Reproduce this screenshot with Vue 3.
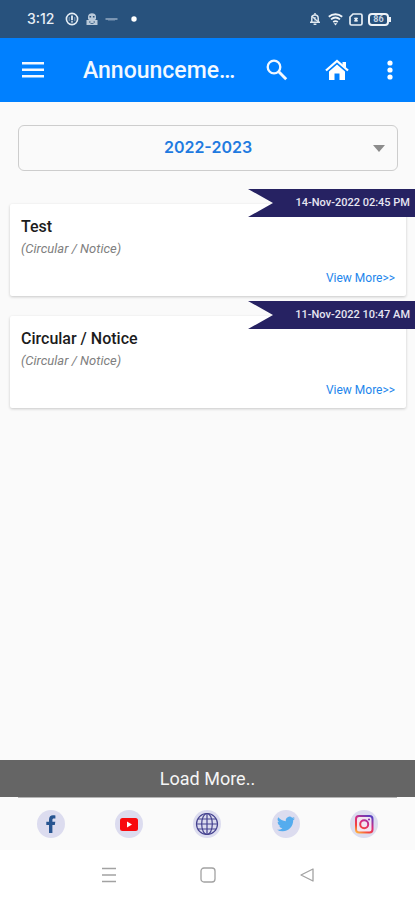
<script setup>
import { ref } from 'vue'

const session = ref('2022-2023')

const notices = [
  { title: 'Test', type: '(Circular / Notice)', date: '14-Nov-2022 02:45 PM' },
  { title: 'Circular / Notice', type: '(Circular / Notice)', date: '11-Nov-2022 10:47 AM' },
]
</script>

<template>
  <div class="screen">
    <div class="status">
      <span class="time">3:12</span>
      <svg class="s-alert" width="14" height="14" viewBox="0 0 14 14" fill="none" stroke="#e4edf5">
        <circle cx="7" cy="7" r="5.6" stroke-width="1.6" />
        <path d="M7 3.6v4.6M7 9.2v1.4" stroke-width="1.8" />
        <path d="M4.2 5v4M9.8 5v4" stroke-width=".8" opacity=".6" />
      </svg>
      <svg class="s-app" width="12" height="14" viewBox="0 0 12 14" fill="#b9c9d9">
        <path d="M2 7V4.500C2 0 10 0 10 4.500V7l-1 1H3z" />
        <path d="M.5 8h11v5H.5z" />
        <path d="M3.500 4h1.600v1.600H3.500zM6.900 4h1.600v1.600H6.900zM3 9.500h1.500v1H3zM7.500 9.500H9v1H7.500zM4.500 11.200h3v.8h-3z" fill="#28527d" />
      </svg>
      <svg class="s-dash" width="13" height="6" viewBox="0 0 13 6" fill="none" stroke="#9cb2c7">
        <path d="M.5 3h12" stroke-width="1.400" />
        <path d="M3 4.200h7" stroke-width="1" opacity=".5" />
      </svg>
      <svg class="s-dot" width="6" height="6" viewBox="0 0 6 6"><circle cx="3" cy="3" r="2.700" fill="#fff" /></svg>
      <span class="grow"></span>
      <svg width="12" height="14" viewBox="0 0 12 14" fill="none" stroke="#dfe8f0" stroke-width="1.500">
        <path d="M2.800 9.600V6.200C2.800 4 4.200 2.900 6 2.900S9.200 4 9.200 6.200v3.400M1 10.200h10M4.600 12.300h2.800M6 1v2" />
        <path d="M2.500 4l7 6M6 5v3.500" stroke-width="1.200" />
      </svg>
      <svg class="s-wifi" width="15" height="13" viewBox="0 0 15 13" fill="none" stroke="#f0f5f9" stroke-width="1.800">
        <path d="M.8 3.800c4-3.400 9.400-3.400 13.400 0M3 6.400c2.800-2.300 6.200-2.300 9 0M5.200 8.900c1.500-1.100 3.100-1.100 4.600 0" />
        <path d="M5.700 10.300h3.600L7.500 12.400z" fill="#f0f5f9" stroke="none" />
      </svg>
      <svg class="s-sim" width="14" height="13" viewBox="0 0 14 13" fill="none" stroke="#e8eff5" stroke-width="1.700">
        <path d="M4 1h7.500Q13 1 13 2.500v8Q13 12 11.500 12h-9Q1 12 1 10.500V4z" />
        <path d="M5.600 4.700l2.800 3.800M8.400 4.700L5.600 8.500" />
      </svg>
      <span class="battery">86</span>
    </div>

    <header class="bar">
      <button class="icon menu" aria-label="Menu">
        <svg width="22" height="16" viewBox="0 0 22 16" fill="#f2f8ff"><path d="M0 0h22v2.500H0zM0 6.500h22V9H0zM0 13h22v2.500H0z" /></svg>
      </button>
      <h1>Announceme…</h1>
      <button class="icon search" aria-label="Search">
        <svg width="22" height="22" viewBox="0 0 22 22" fill="none" stroke="#f2f8ff">
          <circle cx="8" cy="8" r="6.300" stroke-width="2.300" />
          <path d="M12.800 12.800l7.400 7.400" stroke-width="2.900" />
        </svg>
      </button>
      <button class="icon home" aria-label="Home">
        <svg width="24" height="22" viewBox="0 0 24 22">
          <path d="M1 11.500L12 2l11 9.500" fill="none" stroke="#fff" stroke-width="2.300" />
          <path d="M17.500 3H21v6l-3.500-3z" fill="#fff" />
          <path d="M4 12.400l8-6.900 8 6.900V21h-5.500v-6.500h-5V21H4z" fill="#fff" />
        </svg>
      </button>
      <button class="icon more" aria-label="More options">
        <svg width="6" height="20" viewBox="0 0 6 20" fill="#fff"><circle cx="3" cy="3" r="2.600" /><circle cx="3" cy="10" r="2.600" /><circle cx="3" cy="17" r="2.600" /></svg>
      </button>
    </header>

    <main>
      <div class="picker">
        <select v-model="session" aria-label="Session">
          <option>2022-2023</option>
        </select>
        <svg class="caret" width="12" height="7" viewBox="0 0 12 7"><path d="M0 0h12L6 7z" fill="#8c8c8c" /></svg>
      </div>

      <article v-for="n in notices" :key="n.date" class="card">
        <time class="ribbon">{{ n.date }}</time>
        <h2>{{ n.title }}</h2>
        <p>{{ n.type }}</p>
        <a href="#">View More&gt;&gt;</a>
      </article>
    </main>

    <button class="load">Load More..</button>

    <footer class="social">
      <a href="#" aria-label="Facebook">
        <svg width="28" height="28" viewBox="0 0 28 28">
          <path d="M12 23v-8H9.300v-3.200H12V9.700C12 6.800 13.600 5.300 16 5.300c1 0 1.900.1 2.400.2v2.900h-1.500c-1.200 0-1.500.7-1.500 1.600v1.800h2.900l-.5 3.200h-2.400v8z" fill="#285591" />
        </svg>
      </a>
      <a href="#" aria-label="YouTube">
        <svg width="28" height="28" viewBox="0 0 28 28">
          <rect x="5" y="8" width="18" height="13" rx="2.500" fill="#f80a0e" />
          <path d="M12 11.500v6l5-3z" fill="#fff" />
        </svg>
      </a>
      <a href="#" aria-label="Website">
        <svg width="28" height="28" viewBox="0 0 28 28" fill="none" stroke="#45428f" stroke-width="1.200">
          <circle cx="14" cy="14" r="10.500" />
          <ellipse cx="14" cy="14" rx="5.300" ry="10.500" />
          <path d="M14 3.500v21M3.500 14h21M5 9h18M5 19h18" />
        </svg>
      </a>
      <a href="#" aria-label="Twitter">
        <svg width="28" height="28" viewBox="0 0 28 28">
          <path transform="translate(5 5) scale(.75)" d="M23.950 4.570a10 10 0 0 1-2.820.77 4.960 4.960 0 0 0 2.160-2.720 9.900 9.900 0 0 1-3.120 1.190 4.920 4.920 0 0 0-8.380 4.480A13.930 13.930 0 0 1 1.640 3.160a4.920 4.920 0 0 0 1.520 6.570 4.900 4.900 0 0 1-2.230-.61v.06a4.920 4.920 0 0 0 3.950 4.830 5 5 0 0 1-2.210.08 4.940 4.940 0 0 0 4.600 3.420A9.870 9.870 0 0 1 0 19.540a13.940 13.940 0 0 0 7.550 2.210c9.050 0 14-7.500 14-13.980 0-.21 0-.42-.02-.63a9.940 9.940 0 0 0 2.420-2.570z" fill="#55acee" />
        </svg>
      </a>
      <a href="#" aria-label="Instagram">
        <svg width="28" height="28" viewBox="0 0 28 28" fill="none" stroke="url(#insta)">
          <defs>
            <linearGradient id="insta" gradientUnits="userSpaceOnUse" x1="7" y1="23" x2="18" y2="5">
              <stop offset="0" stop-color="#ffb43c" /><stop offset=".3" stop-color="#f5443c" />
              <stop offset=".6" stop-color="#d82a80" /><stop offset="1" stop-color="#5a3fc0" />
            </linearGradient>
          </defs>
          <rect x="6" y="6" width="16.500" height="16.500" rx="3" fill="#f3e6f2" stroke-width="2" />
          <circle cx="14.200" cy="14.200" r="4" stroke-width="2" />
          <circle cx="19" cy="9.500" r="1.100" fill="#8a35b0" stroke="none" />
        </svg>
      </a>
    </footer>

    <nav class="system">
      <button aria-label="Recent apps">
        <svg width="16" height="16" viewBox="0 0 16 16" stroke="#a2a2a2" stroke-width="1.300"><path d="M1 1.500h14M1 8h14M1 14.500h14" /></svg>
      </button>
      <button aria-label="Home screen">
        <svg width="16" height="16" viewBox="0 0 16 16" fill="none" stroke="#a2a2a2" stroke-width="1.300"><rect x="1" y="1" width="14" height="14" rx="3" /></svg>
      </button>
      <button aria-label="Back">
        <svg width="16" height="16" viewBox="0 0 16 16" fill="none" stroke="#a2a2a2" stroke-width="1.300"><path d="M14 2v12L2 8z" stroke-linejoin="round" /></svg>
      </button>
    </nav>
  </div>
</template>

<style>
body {
  margin: 0;
  background: #fafafa;
}
</style>

<style scoped>
.screen {
  display: flex;
  flex-direction: column;
  min-height: 100vh;
  font-family: Roboto, "Liberation Sans", sans-serif;
  background: #fafafa;
}
button {
  border: 0;
  padding: 0;
  background: none;
  font-family: inherit;
}
svg {
  display: block;
  flex: none;
}
.status {
  display: flex;
  align-items: center;
  height: 38px;
  padding: 0 26px 0 27px;
  box-sizing: border-box;
  background: #28527d;
}
.time {
  width: 38px;
  font: 500 14px/20px Inter, sans-serif;
  color: #e8eff6;
}
.s-app { margin-left: 7px; }
.s-dash { margin-left: 7px; }
.s-dot { margin-left: 13px; }
.grow { flex: 1; }
.s-wifi { margin-left: 7px; }
.s-sim { margin-left: 6px; }
.battery {
  position: relative;
  box-sizing: border-box;
  width: 21px;
  height: 13px;
  margin-left: 5px;
  border: 2px solid #eef3f8;
  border-radius: 4px;
  font: 700 9px/9px Roboto, sans-serif;
  text-align: center;
  color: #c5d4e2;
}
.battery::after {
  content: "";
  position: absolute;
  top: 2px;
  right: -4px;
  width: 2px;
  height: 5px;
  background: #eef3f8;
}
.bar {
  display: flex;
  align-items: center;
  height: 64px;
  padding: 0 22px;
  background: #0080ff;
}
.icon {
  display: flex;
  justify-content: center;
}
.bar h1 {
  flex: 1;
  min-width: 0;
  margin: 2px 24px 0 39px;
  white-space: nowrap;
  font-size: 23px;
  font-weight: 500;
  line-height: 32px;
  color: #f2f8ff;
}
.home { margin-left: 37px; }
.more { margin-left: 38px; }
main {
  flex: 1;
  padding: 23px 9px 0 10px;
}
.picker {
  position: relative;
  margin: 0 8px 33px;
}
select {
  display: block;
  width: 100%;
  height: 46px;
  padding: 0 24px 2px;
  border: 1px solid #cdcdcd;
  border-radius: 6px;
  appearance: none;
  background: #fafafa;
  font: 600 16px/20px Inter, sans-serif;
  color: #1f7ae0;
  text-align: center;
  text-align-last: center;
}
.caret {
  position: absolute;
  top: 20px;
  right: 13px;
  pointer-events: none;
}
.card {
  position: relative;
  display: flex;
  flex-direction: column;
  min-height: 92px;
  box-sizing: border-box;
  margin-bottom: 20px;
  padding: 12px 11px 10px;
  border-radius: 2px;
  background: #fff;
  box-shadow: 0 1px 3px rgba(0, 0, 0, 0.2);
}
.ribbon {
  position: absolute;
  top: -15px;
  right: -9px;
  box-sizing: border-box;
  width: 167px;
  padding-right: 5px;
  background: #262262;
  clip-path: polygon(0 0, 100% 0, 100% 100%, 0 100%, 25px 50%);
  font-size: 11px;
  font-weight: 500;
  line-height: 28px;
  text-align: right;
  color: #e6e6f2;
}
.card h2 {
  margin: 0;
  font-size: 16px;
  font-weight: 500;
  line-height: 22px;
  color: #1c1c1c;
}
.card p {
  margin: 1px 0 0;
  font-size: 13px;
  font-style: italic;
  line-height: 20px;
  color: #808080;
}
.card a {
  align-self: flex-end;
  margin-top: auto;
  font-size: 12px;
  line-height: 16px;
  color: #1e86ec;
  text-decoration: none;
}
.load {
  height: 37px;
  background: #656565;
  font-size: 18px;
  line-height: 24px;
  color: #f5f5f5;
}
.social {
  position: relative;
  display: grid;
  grid-template-columns: repeat(5, 1fr);
  place-items: center;
  height: 53px;
  padding: 0 12px;
}
.social::before {
  content: "";
  position: absolute;
  top: 0;
  left: 18px;
  right: 18px;
  height: 1px;
  background: #b4b4b4;
}
.social a {
  border-radius: 50%;
  background: #dcdcef;
}
.system {
  display: grid;
  grid-template-columns: repeat(3, 1fr);
  place-items: center;
  height: 50px;
  padding: 0 59px;
  background: #fff;
}
</style>
